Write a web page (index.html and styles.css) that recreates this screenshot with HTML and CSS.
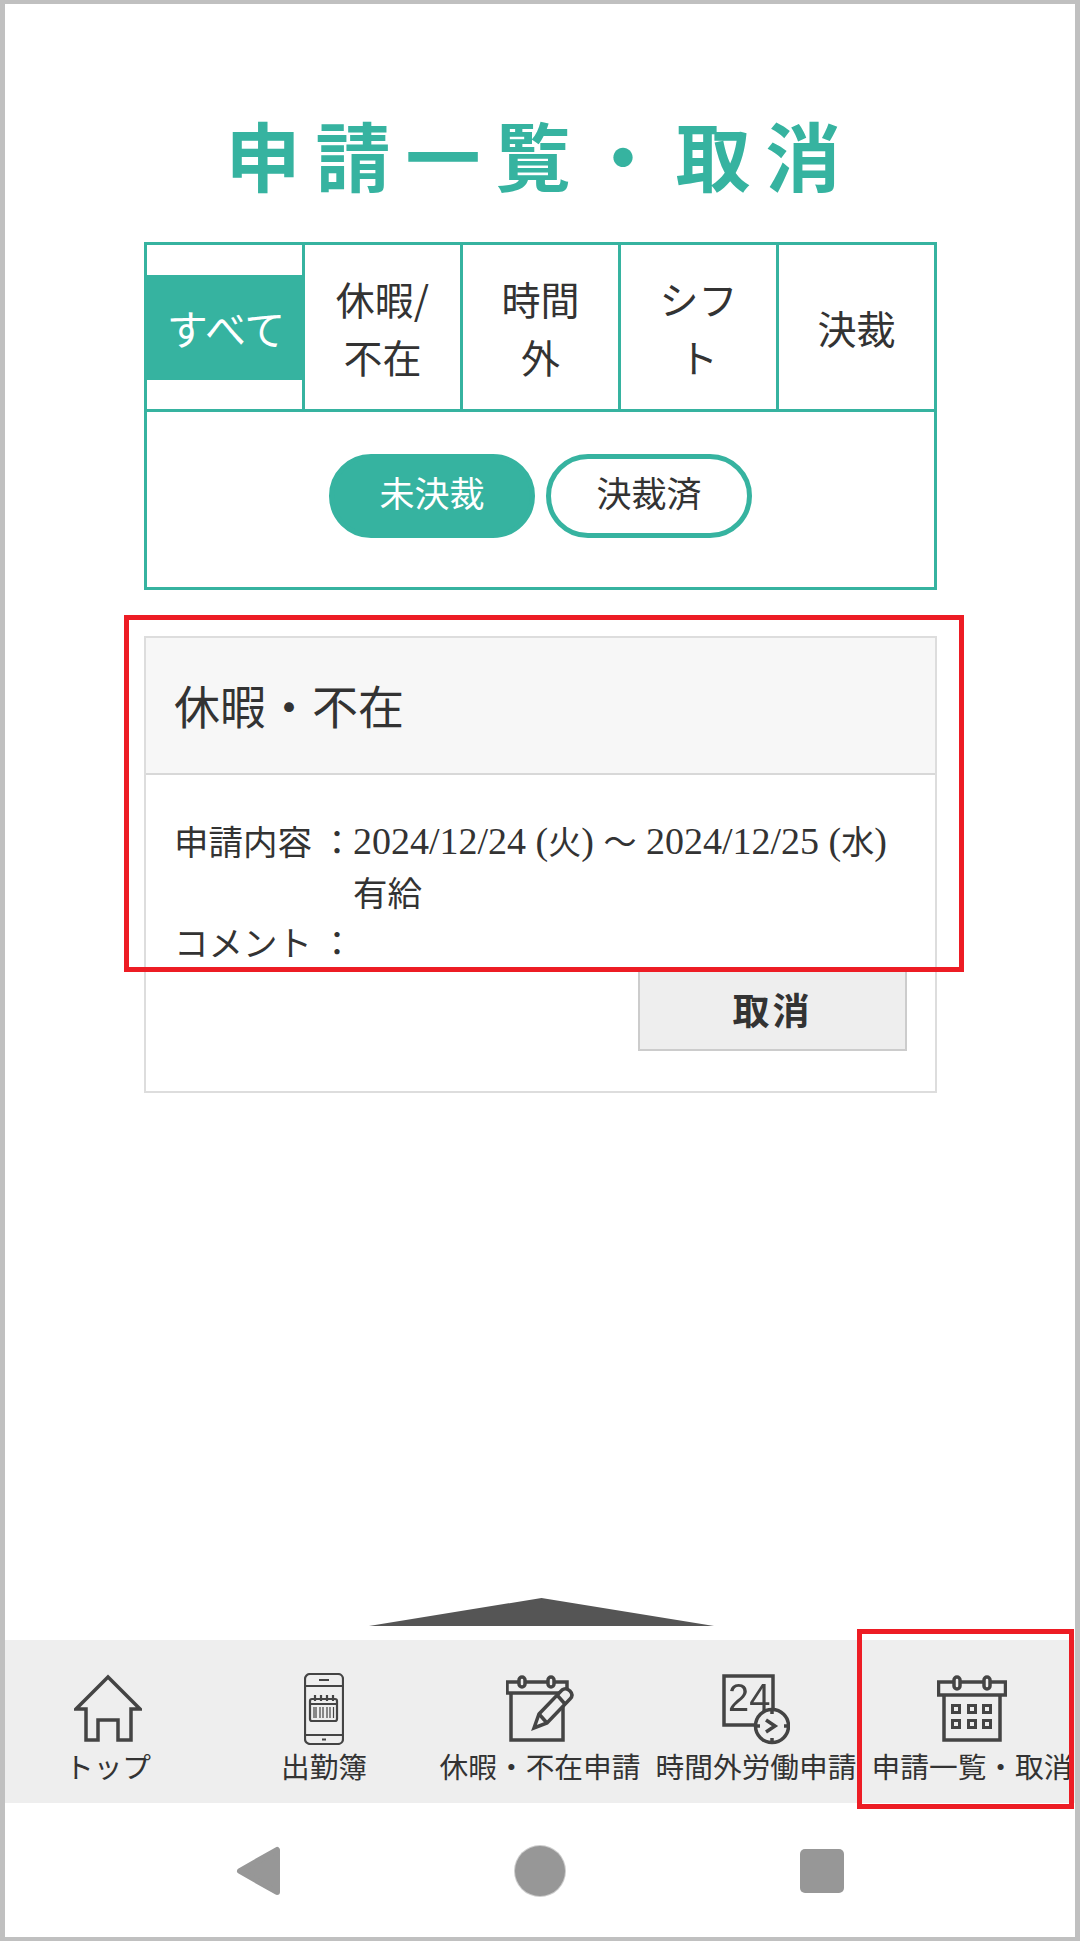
FILE: index.html
```html
<!DOCTYPE html>
<html lang="ja">
<head>
    <meta charset="UTF-8">
    <meta name="viewport" content="width=device-width, initial-scale=1.0">
    <title>申請一覧・取消</title>
    <link rel="stylesheet" href="styles.css">
</head>
<body>
    <div class="screen">
        <main class="content">
            <h1 class="title">申請一覧・取消</h1>

            <section class="filter">
                <div class="tabs">
                    <a class="tab active">すべて</a>
                    <a class="tab">休暇/不在</a>
                    <a class="tab">時間外</a>
                    <a class="tab">シフト</a>
                    <a class="tab">決裁</a>
                </div>
                <div class="status">
                    <a class="pill on">未決裁</a>
                    <a class="pill">決裁済</a>
                </div>
            </section>

            <section class="card">
                <h2 class="card-head">休暇・不在</h2>
                <div class="card-body">
                    <div class="row">
                        <div class="label">申請内容 ：</div>
                        <div class="value">
                            <div class="dates">2024/12/24 (<span class="kanji">火</span>) <span class="kanji">～</span> 2024/12/25 (<span class="kanji">水</span>)</div>
                            <div>有給</div>
                        </div>
                    </div>
                    <div class="row">
                        <div class="label">コメント ：</div>
                        <div class="value"></div>
                    </div>
                    <div class="actions">
                        <button class="cancel" type="button">取消</button>
                    </div>
                </div>
            </section>
        </main>

        <div class="bottom">
            <div class="handle"></div>
            <nav class="nav">
                <div class="nav-list">
                    <a class="nav-item">
                        <svg class="icon" width="68" height="72" viewBox="0 0 68 72">
                            <path d="M34 4 L2 36 L12 36 L12 67 L24 67 L24 47 L44 47 L44 67 L57 67 L57 36 L66 36 Z"/>
                        </svg>
                        <span>トップ</span>
                    </a>
                    <a class="nav-item">
                        <svg class="icon" width="40" height="72" viewBox="0 0 40 72">
                            <rect class="thin" x="1" y="1" width="38" height="70" rx="5"/>
                            <path class="thin" d="M1 13 H39 M1 62 H39 M15 7 H25 M18 66.500 H22"/>
                            <rect class="thin" x="6" y="26" width="27" height="22" rx="2"/>
                            <path class="thin" d="M6 31 H33 M11 22 V28 M17 22 V28 M23 22 V28 M29 22 V28"/>
                            <path class="hair" d="M10 34 V45 M12 34 V45 M16 34 V45 M19 34 V45 M23 34 V45 M26 34 V45 M29.500 34 V45"/>
                        </svg>
                        <span>出勤簿</span>
                    </a>
                    <a class="nav-item">
                        <svg class="icon" width="68" height="72" viewBox="0 0 68 72">
                            <path d="M5 20 V67 H57 V20"/>
                            <rect x="1" y="9" width="60" height="11"/>
                            <rect class="fill" x="13" y="4" width="6" height="10" rx="3"/>
                            <rect class="fill" x="42" y="4" width="6" height="10" rx="3"/>
                            <path class="fill" d="M28 55 L33 41 L56 17 Q60 14 64 18 Q68 22 64 26 L41 50 Z"/>
                            <path d="M33 41 L41 50 M51 22 L59 31"/>
                        </svg>
                        <span>休暇・不在申請</span>
                    </a>
                    <a class="nav-item">
                        <svg class="icon" width="68" height="72" viewBox="0 0 68 72">
                            <rect x="2" y="3" width="49" height="49"/>
                            <text class="num" x="6" y="38">24</text>
                            <circle class="fill" cx="50" cy="53" r="16.500"/>
                            <path d="M50 36 V41 M50 65 V70 M33 53 H38 M62 53 H67 M44 47 L53 53 L44 59"/>
                        </svg>
                        <span>時間外労働申請</span>
                    </a>
                    <a class="nav-item">
                        <svg class="icon" width="70" height="72" viewBox="0 0 70 72">
                            <path d="M7 22 V67 H63 V22"/>
                            <rect x="1.500" y="9" width="67" height="13"/>
                            <rect class="fill" x="17" y="4" width="6" height="12" rx="3"/>
                            <rect class="fill" x="47" y="4" width="6" height="12" rx="3"/>
                            <rect class="cell" x="15.500" y="32.500" width="7" height="7"/>
                            <rect class="cell" x="31.500" y="32.500" width="7" height="7"/>
                            <rect class="cell" x="46.500" y="32.500" width="7" height="7"/>
                            <rect class="cell" x="15.500" y="47.500" width="7" height="7"/>
                            <rect class="cell" x="31.500" y="47.500" width="7" height="7"/>
                            <rect class="cell" x="46.500" y="47.500" width="7" height="7"/>
                        </svg>
                        <span>申請一覧・取消</span>
                    </a>
                </div>
            </nav>
            <div class="system-bar">
                <svg width="46" height="50" viewBox="0 0 46 50">
                    <path class="sys" d="M41 4 V46 L4 25 Z"/>
                </svg>
                <div class="sys-home"></div>
                <div class="sys-recent"></div>
            </div>
        </div>

        <div class="mark mark-card"></div>
        <div class="mark mark-nav"></div>
    </div>
</body>
</html>
```

FILE: styles.css
```css
* {
    box-sizing: border-box;
}
body {
    margin: 0;
    background: #fff;
    color: #333;
    font-family: "Noto Sans CJK JP", "Noto Sans", sans-serif;
}
.screen {
    position: relative;
    width: 1080px;
    height: 1941px;
    border: solid #c0c0c0;
    border-width: 4px 5px;
    display: flex;
    flex-direction: column;
    overflow: hidden;
}
.content {
    padding: 96px 138px 0 139px;
}
.title {
    margin: 0 0 34px;
    color: #36b3a0;
    font-size: 75px;
    font-weight: 700;
    line-height: 108px;
    letter-spacing: 15px;
    text-align: center;
}

/* Filter box */
.filter {
    border: 3px solid #36b3a0;
}
.tabs {
    display: grid;
    grid-template-columns: 155px 158px 158px 158px 1fr;
    height: 167px;
    border-bottom: 3px solid #36b3a0;
}
.tab {
    display: flex;
    align-items: center;
    justify-content: center;
    padding: 0 24px;
    border-left: 3px solid #36b3a0;
    font-size: 39px;
    line-height: 58.500px;
    text-align: center;
}
.tab:first-child {
    border-left: none;
}
.tab.active {
    align-self: center;
    height: 105px;
    margin-right: -3px;
    background: #36b3a0;
    color: #fff;
    padding: 0;
    font-size: 41px;
    position: relative;
}
.status {
    display: flex;
    justify-content: center;
    gap: 11px;
    padding: 42px 0 49px;
}
.pill {
    width: 206px;
    height: 84px;
    border: 5px solid #36b3a0;
    border-radius: 42px;
    font-size: 35px;
    line-height: 66px;
    text-align: center;
}
.pill.on {
    background: #36b3a0;
    color: #fff;
}

/* Request card */
.card {
    margin-top: 46px;
    border: 2px solid #ddd;
}
.card-head {
    margin: 0;
    height: 137px;
    padding-left: 28px;
    background: #f7f7f7;
    border-bottom: 2px solid #d8d8d8;
    font-size: 46px;
    font-weight: 400;
    line-height: 133px;
}
.card-body {
    padding: 40px 28px 40px 28px;
    font-size: 34.500px;
    line-height: 50px;
}
.row {
    display: flex;
}
.label {
    flex: none;
    width: 179px;
    white-space: nowrap;
}
.dates {
    font-family: "Liberation Serif", "Noto Sans CJK JP", serif;
    font-size: 38px;
    white-space: nowrap;
}
.kanji {
    font-family: "Noto Sans CJK JP", sans-serif;
    font-size: 33px;
}
.actions {
    display: flex;
    justify-content: flex-end;
    margin-top: 3px;
}
.cancel {
    width: 269px;
    height: 82px;
    padding: 0 0 3px;
    background: #eee;
    border: 2px solid #ccc;
    color: #333;
    font-family: inherit;
    font-size: 37px;
    font-weight: 700;
    letter-spacing: 3px;
}

/* Bottom area */
.bottom {
    margin-top: auto;
}
.handle {
    width: 345px;
    height: 28px;
    margin: 0 0 14px 364px;
    background: #555;
    clip-path: polygon(0 100%, 50% 0, 100% 100%);
}
.nav {
    height: 163px;
    background: #eee;
    overflow: hidden;
}
.nav-list {
    display: grid;
    grid-template-columns: repeat(5, 216px);
    margin: 0 -5px;
    padding-top: 33px;
}
.nav-item {
    display: flex;
    flex-direction: column;
    align-items: center;
    font-size: 28.700px;
    line-height: 42px;
    white-space: nowrap;
}
.icon {
    display: block;
    fill: none;
    stroke: #444;
    stroke-width: 3.500;
    filter: blur(0.4px);
}
.icon .fill {
    fill: #eee;
}
.icon .thin {
    stroke-width: 2.200;
}
.icon .hair {
    stroke-width: 1.200;
}
.icon .cell {
    stroke-width: 3;
}
.icon .num {
    fill: #444;
    stroke: none;
    font-family: "Liberation Sans", sans-serif;
    font-size: 38px;
}
.system-bar {
    position: relative;
    height: 134px;
}
.system-bar svg {
    position: absolute;
    left: 231px;
    top: 43px;
}
.sys {
    fill: #979797;
    stroke: #979797;
    stroke-width: 6;
    stroke-linejoin: round;
}
.sys-home {
    position: absolute;
    left: 510px;
    top: 43px;
    width: 50px;
    height: 50px;
    border-radius: 50%;
    background: #979797;
    box-shadow: 0 0 0 1px #ccc;
}
.sys-recent {
    position: absolute;
    left: 795px;
    top: 46px;
    width: 44px;
    height: 44px;
    border-radius: 5px;
    background: #979797;
}

/* Red annotation frames */
.mark {
    position: absolute;
    border: 5px solid #ed1c24;
}
.mark-card {
    left: 119px;
    top: 611px;
    width: 840px;
    height: 357px;
}
.mark-nav {
    left: 852px;
    top: 1625px;
    width: 217px;
    height: 180px;
}
```
